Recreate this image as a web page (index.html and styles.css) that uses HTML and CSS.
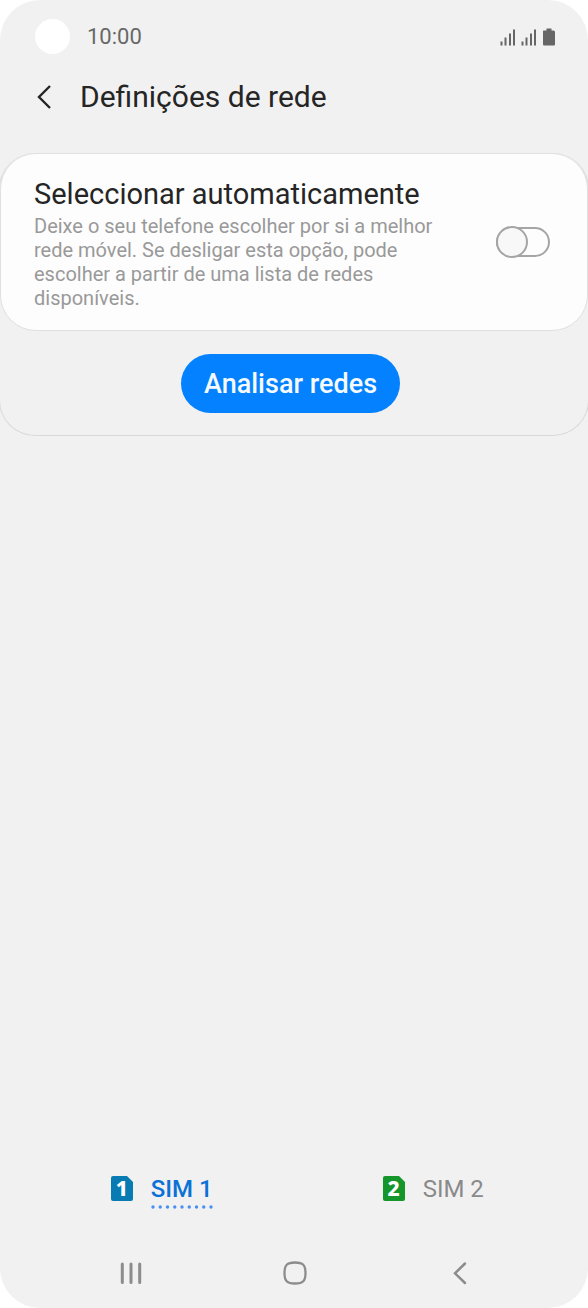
FILE: index.html
```html
<!DOCTYPE html>
<html lang="pt">
<head>
<meta charset="utf-8">
<meta name="viewport" content="width=device-width, initial-scale=1">
<title>Definições de rede</title>
<link rel="stylesheet" href="styles.css">
</head>
<body>
<div class="screen">
  <div class="status">
    <span class="camera"></span>
    <time class="clock">10:00</time>
    <svg class="status-icons" width="57" height="20" viewBox="0 0 57 20" aria-hidden="true">
      <g fill="#666">
        <path d="M1.500 14.500h2v4h-2zM5.500 10.500h2v8h-2zM10 6.500h2v12h-2zM14 2.500h2v16h-2z"/>
        <path d="M22.500 14.500h2v4h-2zM26.500 10.500h2v8h-2zM31 6.500h2v12h-2zM35 2.500h2v16h-2z"/>
        <path d="M44.500 3.500h3V1.500h5v2h2q1.500 0 1.500 1.500v12.500q0 1-1 1h-10q-1 0-1-1v-13q0-1 .5-1z"/>
      </g>
    </svg>
  </div>

  <header class="header">
    <button class="back" type="button" aria-label="Voltar">
      <svg width="16" height="24" viewBox="0 0 16 24"><path d="M14 1L3 12l11 11" fill="none" stroke="#252525" stroke-width="2.4"/></svg>
    </button>
    <h1 class="title">Definições de rede</h1>
  </header>

  <main class="panel">
    <label class="card" for="auto">
      <span class="card-text">
        <span class="card-title">Seleccionar automaticamente</span>
        <span class="card-desc">Deixe o seu telefone escolher por si a melhor rede móvel. Se desligar esta opção, pode escolher a partir de uma lista de redes disponíveis.</span>
      </span>
      <input class="switch" id="auto" type="checkbox" role="switch">
    </label>
    <div class="actions">
      <button class="scan" type="button">Analisar redes</button>
    </div>
  </main>

  <div class="tabs" role="tablist">
    <button class="tab tab-active" type="button" role="tab" aria-selected="true">
      <span class="sim">
        <svg width="22" height="25" viewBox="0 0 22 25" aria-hidden="true"><path d="M2 0h14l6 6v17q0 2-2 2H2q-2 0-2-2V2q0-2 2-2z" fill="#077bb2"/></svg>
        <span class="sim-number">1</span>
      </span>
      <span class="tab-label">SIM 1
        <svg class="dots" width="62" height="4" viewBox="0 0 62 4" aria-hidden="true"><path d="M2 2h58.500" stroke="#4a90f2" stroke-width="3.400" stroke-linecap="round" stroke-dasharray="0 7.250"/></svg>
      </span>
    </button>
    <button class="tab" type="button" role="tab" aria-selected="false">
      <span class="sim">
        <svg width="22" height="25" viewBox="0 0 22 25" aria-hidden="true"><path d="M2 0h14l6 6v17q0 2-2 2H2q-2 0-2-2V2q0-2 2-2z" fill="#14962b"/></svg>
        <span class="sim-number">2</span>
      </span>
      <span class="tab-label">SIM 2</span>
    </button>
  </div>

  <nav class="nav">
    <button class="nav-button" type="button" aria-label="Recentes">
      <svg width="26" height="26" viewBox="0 0 26 26"><path d="M4.300 4v18.500M13 4v18.500M21.700 4v18.500" stroke="#8c8c8c" stroke-width="3" stroke-linecap="round"/></svg>
    </button>
    <button class="nav-button" type="button" aria-label="Início">
      <svg width="26" height="26" viewBox="0 0 26 26"><path d="M13 2.500C21 2.500 23.500 5 23.500 13S21 23.500 13 23.500 2.500 21 2.500 13 5 2.500 13 2.500z" fill="none" stroke="#8c8c8c" stroke-width="2.300"/></svg>
    </button>
    <button class="nav-button" type="button" aria-label="Anterior">
      <svg width="26" height="26" viewBox="0 0 26 26"><path d="M19 3.500L9 13.300l10 9.700" fill="none" stroke="#8c8c8c" stroke-width="2.500" stroke-linecap="round"/></svg>
    </button>
  </nav>
</div>
</body>
</html>
```
FILE: styles.css
```css
*,
*::before {
  box-sizing: border-box;
}

body {
  margin: 0;
  background: #fff;
  color: #252525;
  font-family: Roboto, "Liberation Sans", sans-serif;
}

button {
  padding: 0;
  border: 0;
  background: none;
  color: inherit;
  font: inherit;
}

svg {
  display: block;
}

.screen {
  display: flex;
  flex-direction: column;
  min-height: 100vh;
  overflow: hidden;
  border-radius: 40px;
  background: #f1f1f1;
}

.status {
  display: flex;
  align-items: center;
  height: 73px;
  padding: 0 32px 0 35px;
}

.camera {
  width: 35px;
  height: 35px;
  border-radius: 50%;
  background: #fff;
}

.clock {
  margin-left: 17px;
  color: #686868;
  font-size: 22px;
}

.status-icons {
  margin-left: auto;
}

.header {
  display: flex;
  align-items: center;
  gap: 28px;
  height: 47px;
  padding: 0 36px;
}

.title {
  margin: 0;
  font-size: 30px;
  font-weight: 400;
}

.panel {
  margin: 33px -1px 0;
  border: 1px solid #dadada;
  border-top: 0;
  border-radius: 36px;
}

.card {
  display: flex;
  align-items: center;
  justify-content: space-between;
  padding: 20px 37px 20px 33px;
  border: 1px solid #e0e0e0;
  border-radius: 36px;
  background: #fdfdfd;
}

.card-text {
  max-width: 412px;
}

.card-title,
.card-desc {
  display: block;
}

.card-title {
  font-size: 29px;
  line-height: 40px;
}

.card-desc {
  color: #999;
  font-size: 20px;
  line-height: 24px;
}

.switch {
  display: flex;
  align-items: center;
  width: 54px;
  height: 30px;
  margin: 0;
  border: 2px solid #a5a5a5;
  border-radius: 15px;
  background: #fdfdfd;
  appearance: none;
}

.switch::before {
  flex: none;
  width: 32px;
  height: 32px;
  margin-left: -2px;
  border: 2px solid #a5a5a5;
  border-radius: 50%;
  background: #f8f8f8;
  content: "";
}

.actions {
  display: flex;
  justify-content: center;
  padding: 23px 7px 22px 0;
}

.scan {
  height: 59px;
  padding: 1px 23px 0;
  border-radius: 30px;
  background: #0381fe;
  color: #f4faff;
  font-size: 27px;
  font-weight: 500;
}

.tabs {
  display: grid;
  grid-template-columns: 1fr 1fr;
  margin-top: auto;
  padding: 0 19px 0 26px;
}

.tab {
  display: flex;
  align-items: center;
  justify-content: center;
  gap: 18px;
  height: 48px;
  color: #8a8a8a;
  font-size: 24px;
}

.tab-active {
  color: #0c71d6;
  font-weight: 500;
}

.tab-label {
  position: relative;
  padding-top: 1px;
}

.dots {
  position: absolute;
  top: 31px;
  left: 0;
}

.sim {
  display: grid;
  place-items: center;
}

.sim > * {
  grid-area: 1 / 1;
}

.sim-number {
  z-index: 1;
  color: #fff;
  font-family: "Noto Sans", sans-serif;
  font-size: 21px;
  font-weight: 800;
  line-height: 24px;
}

.nav {
  display: grid;
  grid-template-columns: repeat(3, 1fr);
  height: 70px;
  margin-top: 26px;
  padding: 0 47px 0 49px;
}

.nav-button {
  display: grid;
  place-items: center;
}
```
